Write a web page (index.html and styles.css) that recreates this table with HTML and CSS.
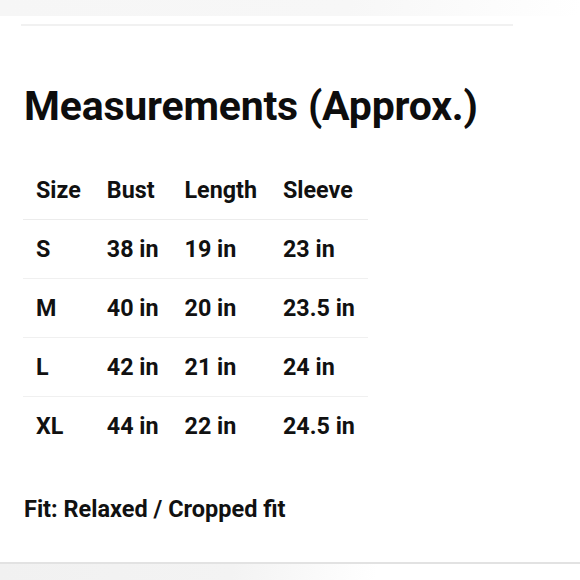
FILE: index.html
```html
<!DOCTYPE html>
<html>
<head>
<meta charset="utf-8">
<link rel="stylesheet" href="styles.css">
</head>
<body>
<div class="band band-top"></div>
<main class="card">
  <div class="rule"></div>
  <h1 class="title">Measurements (Approx.)</h1>
  <table class="sizes">
    <thead>
      <tr><th>Size</th><th>Bust</th><th>Length</th><th>Sleeve</th></tr>
    </thead>
    <tbody>
      <tr><td>S</td><td>38 in</td><td>19 in</td><td>23 in</td></tr>
      <tr><td>M</td><td>40 in</td><td>20 in</td><td>23.5 in</td></tr>
      <tr><td>L</td><td>42 in</td><td>21 in</td><td>24 in</td></tr>
      <tr><td>XL</td><td>44 in</td><td>22 in</td><td>24.5 in</td></tr>
    </tbody>
  </table>
  <p class="fit"><span class="fit-label">Fit:</span> <strong>Relaxed / Cropped fit</strong></p>
</main>
<div class="band band-bottom"></div>
</body>
</html>
```
FILE: styles.css
```css
html, body {
  margin: 0;
  padding: 0;
  background: #fff;
}
body {
  width: 580px;
  height: 580px;
  overflow: hidden;
  font-family: Roboto, "Liberation Sans", sans-serif;
  color: #111;
  display: flex;
  flex-direction: column;
}
.band {
  height: 16px;
  flex: none;
}
.band-top {
  background: linear-gradient(100deg, #f6f6f6 0%, #f7f7f7 60%, #fdfdfd 90%, #fff 100%);
}
.band-bottom {
  border-top: 2px solid #e2e2e2;
  background: linear-gradient(100deg, #f1f1f1 0%, #f3f3f3 40%, #fff 65%);
}
.card {
  flex: 1;
  padding: 8px 67px 0 21px;
  display: flex;
  flex-direction: column;
}
.rule {
  height: 2px;
  background: #f1f1f1;
}
.title {
  margin: 56px 0 0 3px;
  font-size: 41px;
  font-weight: 700;
  line-height: 48px;
  letter-spacing: -0.2px;
  color: #0d0d0d;
}
.sizes {
  margin: 31px 0 0 2px;
  border-collapse: collapse;
  font-size: 23.3px;
  align-self: flex-start;
}
.sizes th,
.sizes td {
  padding: 0 13px;
  height: 58px;
  text-align: left;
  white-space: nowrap;
}
.sizes th {
  font-weight: 700;
  border-bottom: 1px solid #ececec;
}
.sizes td {
  font-weight: 700;
}
.sizes tbody tr:not(:last-child) td {
  border-bottom: 1px solid #f0f0f0;
}
.fit {
  margin: 41px 0 0 3px;
  font-size: 23.5px;
  line-height: 26px;
}
.fit-label {
  font-weight: 700;
}
.fit strong {
  font-weight: 700;
}
```
